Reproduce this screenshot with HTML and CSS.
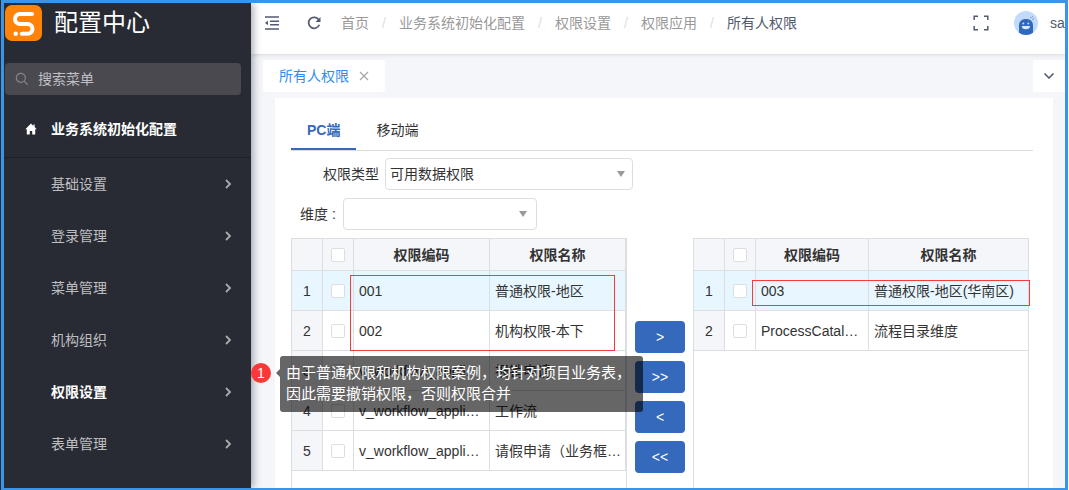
FILE: index.html
```html
<!DOCTYPE html>
<html lang="zh-CN">
<head>
<meta charset="utf-8">
<title>配置中心</title>
<link rel="stylesheet" href="styles.css">
</head>
<body>
<div class="frame">
  <aside class="sidebar">
    <div class="brand">
      <svg class="brand-logo" viewBox="0 0 37 36" aria-hidden="true">
        <rect width="37" height="36" rx="7" fill="#ff8308"/>
        <path d="M27 9H15a5 5 0 0 0-5 5v0a5 5 0 0 0 5 5h7.500a5 5 0 0 1 5 5v0a4.800 4.800 0 0 1-4.800 4.800H16.800" fill="none" stroke="#fff" stroke-width="4" stroke-linecap="round" stroke-linejoin="round"/>
        <circle cx="10.700" cy="28.800" r="2.200" fill="#fff"/>
      </svg>
      <span class="brand-name">配置中心</span>
    </div>
    <label class="search">
      <svg viewBox="0 0 14 14" width="14" height="14" aria-hidden="true"><circle cx="5.800" cy="5.800" r="4.500" fill="none" stroke="#85868d" stroke-width="1.200"/><path d="M9.100 9.100l3.700 3.700" stroke="#85868d" stroke-width="1.200"/></svg>
      <input class="search-input" type="text" placeholder="搜索菜单" aria-label="搜索菜单">
    </label>
    <nav class="menu">
      <a class="menu-home" href="#">
        <svg viewBox="0 0 12 12" width="12" height="12" aria-hidden="true"><path d="M6 .5L.3 6.300h1.500v5.200h3V8h2.400v3.500h3V6.300h1.500L9.700 4.100V1.500H8.400v1.400z" fill="#fff"/></svg>
        <span>业务系统初始化配置</span>
      </a>
      <a class="menu-item" href="#"><span>基础设置</span><svg class="chev" viewBox="0 0 8 10"><path d="M2 1l4 4-4 4"/></svg></a>
      <a class="menu-item" href="#"><span>登录管理</span><svg class="chev" viewBox="0 0 8 10"><path d="M2 1l4 4-4 4"/></svg></a>
      <a class="menu-item" href="#"><span>菜单管理</span><svg class="chev" viewBox="0 0 8 10"><path d="M2 1l4 4-4 4"/></svg></a>
      <a class="menu-item" href="#"><span>机构组织</span><svg class="chev" viewBox="0 0 8 10"><path d="M2 1l4 4-4 4"/></svg></a>
      <a class="menu-item menu-item-active" href="#"><span>权限设置</span><svg class="chev" viewBox="0 0 8 10"><path d="M2 1l4 4-4 4"/></svg></a>
      <a class="menu-item" href="#"><span>表单管理</span><svg class="chev" viewBox="0 0 8 10"><path d="M2 1l4 4-4 4"/></svg></a>
    </nav>
  </aside>

  <div class="main">
    <header class="topbar">
      <button class="icon-btn" type="button" aria-label="收起菜单">
        <svg viewBox="0 0 16 16" width="16" height="16" aria-hidden="true"><path d="M1 2h14M6 6.300h9M6 9.800h9M1 14h14" stroke="#515a6e" stroke-width="1.400" fill="none"/><path d="M4 5.800v4.400L1 8z" fill="#515a6e"/></svg>
      </button>
      <button class="icon-btn refresh" type="button" aria-label="刷新">
        <svg viewBox="0 0 14 14" width="14" height="14" aria-hidden="true"><path d="M11.700 3.700A5.500 5.500 0 1 0 12.300 8.700" fill="none" stroke="#515a6e" stroke-width="1.700"/><path d="M13.500 1v5H8.500z" fill="#515a6e"/></svg>
      </button>
      <nav class="crumbs">
        <a href="#">首页</a><i>/</i><a href="#">业务系统初始化配置</a><i>/</i><a href="#">权限设置</a><i>/</i><a href="#">权限应用</a><i>/</i><span>所有人权限</span>
      </nav>
      <div class="user">
        <button class="icon-btn" type="button" aria-label="全屏">
          <svg viewBox="0 0 16 16" width="16" height="16" aria-hidden="true"><path d="M5 1.200H1.200V5M11 1.200h3.800V5M5 14.800H1.200V11M11 14.800h3.800V11" fill="none" stroke="#515a6e" stroke-width="1.500"/></svg>
        </button>
        <svg class="avatar" viewBox="0 0 24 24" aria-hidden="true">
          <circle cx="12" cy="12" r="12" fill="#c2dafb"/>
          <path d="M5 21.700V14a6 6 0 0 1 6-6h2a6 6 0 0 1 6 6v7.700A11.800 11.800 0 0 1 12 24a11.800 11.800 0 0 1-7-2.300z" fill="#2f69bd"/>
          <rect x="8.500" y="11.700" width="1.600" height="1.600" fill="#d8e8ff"/><rect x="13.500" y="11.700" width="1.600" height="1.600" fill="#d8e8ff"/>
          <path d="M7.800 15h8.200a4.100 3.300 0 0 1-8.200 0z" fill="#d8e8ff"/>
          <path d="M16.600 6.200l.9.900M18.600 8.400l1.100-.7M18.200 5.200l.5.500" stroke="#2f69bd" stroke-width="1"/>
        </svg>
        <span class="user-name">sa</span>
      </div>
    </header>

    <div class="pages">
      <div class="page-tab">
        <span>所有人权限</span>
        <button class="icon-btn" type="button" aria-label="关闭"><svg viewBox="0 0 10 10" width="10" height="10"><path d="M1 1l8 8M9 1L1 9" stroke="#a5a5a5" stroke-width="1.100"/></svg></button>
      </div>
      <button class="page-more" type="button" aria-label="更多"><svg viewBox="0 0 10 6" width="10" height="6"><path d="M.5.500L5 5 9.500.500" fill="none" stroke="#4d5664" stroke-width="1.500"/></svg></button>
    </div>

    <section class="card">
      <div class="tabs">
        <button class="tab tab-active" type="button">PC端</button>
        <button class="tab" type="button">移动端</button>
      </div>
      <div class="field field-type">
        <label for="type">权限类型</label>
        <div class="select-box"><select id="type"><option>可用数据权限</option></select><span class="caret"></span></div>
      </div>
      <div class="field field-dim">
        <label for="dim">维度 :</label>
        <div class="select-box"><select id="dim"><option></option></select><span class="caret"></span></div>
      </div>

      <div class="transfer">
        <div class="grid">
          <table>
            <colgroup><col class="c-tick"><col class="c-tick"><col class="c-left"><col></colgroup>
            <thead><tr><th></th><th><input type="checkbox" aria-label="全选"></th><th>权限编码</th><th>权限名称</th></tr></thead>
            <tbody>
              <tr class="on"><td>1</td><td><input type="checkbox" aria-label="001"></td><td>001</td><td>普通权限-地区</td></tr>
              <tr><td>2</td><td><input type="checkbox" aria-label="002"></td><td>002</td><td>机构权限-本下</td></tr>
              <tr><td>3</td><td><input type="checkbox" aria-label="报销申请"></td><td>v_workflow_appli…</td><td>报销申请</td></tr>
              <tr><td>4</td><td><input type="checkbox" aria-label="工作流"></td><td>v_workflow_appli…</td><td>工作流</td></tr>
              <tr><td>5</td><td><input type="checkbox" aria-label="请假申请"></td><td>v_workflow_appli…</td><td>请假申请（业务框…</td></tr>
            </tbody>
          </table>
          <div class="mark mark-left"></div>
        </div>
        <div class="moves">
          <button type="button">&gt;</button>
          <button type="button">&gt;&gt;</button>
          <button type="button">&lt;</button>
          <button type="button">&lt;&lt;</button>
        </div>
        <div class="grid grid-right">
          <table>
            <colgroup><col class="c-tick"><col class="c-tick"><col class="c-right"><col></colgroup>
            <thead><tr><th></th><th><input type="checkbox" aria-label="全选"></th><th>权限编码</th><th>权限名称</th></tr></thead>
            <tbody>
              <tr class="on"><td>1</td><td><input type="checkbox" aria-label="003"></td><td>003</td><td>普通权限-地区(华南区)</td></tr>
              <tr><td>2</td><td><input type="checkbox" aria-label="流程目录维度"></td><td>ProcessCatal…</td><td>流程目录维度</td></tr>
            </tbody>
          </table>
          <div class="mark mark-right"></div>
        </div>
      </div>
    </section>

    <div class="note">
      <span class="note-num">1</span>
      <span class="note-arrow"></span>
      <p class="note-text">由于普通权限和机构权限案例，均针对项目业务表，<br>因此需要撤销权限，否则权限合并</p>
    </div>
  </div>
</div>
</body>
</html>
```

FILE: styles.css
```css
* { box-sizing: border-box; }

body {
  margin: 0;
  border-left: 1px solid #282b33;
  border-right: 1px solid #f5f8fc;
  font: 14px/20px "Liberation Sans", "Noto Sans CJK SC", sans-serif;
  color: #333;
}

a { color: inherit; text-decoration: none; }
button, input, select { font: inherit; color: inherit; }
svg { display: block; flex: none; }

.frame {
  display: flex;
  height: 100vh;
  border: 3px solid #3a94e7;
  border-bottom-width: 2px;
  overflow: hidden;
}

/* Sidebar */
.sidebar {
  z-index: 1;
  flex: none;
  width: 247px;
  background: #282b33;
  color: #bfbfc1;
  box-shadow: 2px 0 8px rgba(20, 30, 50, .4);
}
.brand {
  display: flex;
  align-items: center;
  gap: 12px;
  height: 60px;
  padding: 2px 1px 22px;
}
.brand-logo { width: 37px; height: 36px; }
.brand-name { font-size: 24px; line-height: 36px; color: #fff; }
.search {
  display: flex;
  align-items: center;
  gap: 9px;
  height: 32px;
  margin: 0 10px 0 1px;
  padding: 0 10px;
  border-radius: 4px;
  background: #4a4950;
}
.search-input {
  flex: 1;
  min-width: 0;
  padding: 0;
  border: 0;
  outline: 0;
  background: none;
}
.search-input::placeholder { color: #bfbfc4; opacity: 1; }
.menu-home {
  display: flex;
  align-items: center;
  gap: 14px;
  height: 63px;
  padding: 6px 21px 0;
  border-bottom: 1px solid #1d2026;
  font-weight: bold;
  color: #fff;
}
.menu-item {
  display: flex;
  align-items: center;
  justify-content: space-between;
  height: 52px;
  padding: 0 19px 0 47px;
}
.menu-item-active { font-weight: bold; color: #fff; }
.chev { width: 8px; height: 10px; fill: none; stroke: #aaabae; stroke-width: 1.800; }

/* Main area */
.main {
  position: relative;
  display: flex;
  flex-direction: column;
  flex: 1;
  min-width: 0;
  background: #f5f6f9;
}
.icon-btn { padding: 0; border: 0; background: none; }
.topbar {
  display: flex;
  flex: none;
  height: 51px;
  padding: 0 0 11px 13px;
  align-items: center;
  background: #fff;
  box-shadow: 0 1px 4px rgba(0, 21, 41, .12);
}
.refresh { margin: 0 20px 0 27px; }
.crumbs { display: flex; color: #999; white-space: nowrap; }
.crumbs i { width: 30px; text-align: center; font-style: normal; color: #dcdee2; }
.crumbs span { color: #515a6e; }
.user { display: flex; align-items: center; margin-left: auto; }
.avatar { width: 24px; height: 24px; margin: 0 12px 0 25px; }
.user-name { width: 15px; color: #515a6e; }

.pages {
  display: flex;
  flex: none;
  justify-content: space-between;
  padding: 6px 0 6px 12px;
}
.page-tab {
  display: flex;
  align-items: center;
  gap: 10px;
  height: 32px;
  padding: 0 16px;
  border-radius: 3px;
  background: #fff;
  color: #2d8cf0;
}
.page-more {
  display: flex;
  align-items: center;
  justify-content: center;
  width: 32px;
  height: 32px;
  padding: 0;
  border: 0;
  border-radius: 3px 0 0 3px;
  background: #fff;
}

.card {
  display: flex;
  flex-direction: column;
  flex: 1;
  min-height: 0;
  margin: 0 12px 0 24px;
  padding: 14px 20px 0 16px;
  background: #fff;
}
.tabs { display: flex; flex: none; gap: 4px; border-bottom: 1px solid #dcdcdc; }
.tab {
  height: 38px;
  padding: 0 16px;
  border: 0;
  border-bottom: 2px solid transparent;
  background: none;
}
.tab-active { border-bottom-color: #3569bb; color: #3569bb; font-weight: bold; }

.field { display: flex; flex: none; align-items: center; margin-top: 8px; }
.field-type { gap: 6px; margin-top: 7px; padding-left: 32px; }
.field-dim { gap: 8px; padding-left: 9px; }
.select-box { position: relative; width: 248px; }
.field-dim .select-box { width: 194px; }
.field-dim label { width: 35px; white-space: nowrap; }
.select-box select {
  appearance: none;
  display: block;
  width: 100%;
  height: 32px;
  padding: 0 4px;
  border: 1px solid #dcdee2;
  border-radius: 4px;
  background: #fff;
}
.caret {
  position: absolute;
  top: 13px;
  right: 8px;
  border: 4px solid transparent;
  border-top: 6px solid #999;
  border-bottom: 0;
  pointer-events: none;
}
.field-dim .caret { right: 10px; }

/* Transfer grids */
.transfer { display: flex; flex: 1; min-height: 0; margin-top: 8px; }
.grid { position: relative; flex: 0 1 336px; min-width: 0; border: 1px solid #dcdee2; border-bottom: 0; }
table { width: 100%; table-layout: fixed; border-collapse: separate; border-spacing: 0; }
.c-tick { width: 31px; }
.c-left { width: 136px; }
.c-right { width: 113px; }
th, td {
  height: 40px;
  padding: 0 5px;
  border-right: 1px solid #dcdee2;
  border-bottom: 1px solid #dcdee2;
  overflow: hidden;
  text-align: left;
  white-space: nowrap;
}
th { height: 32px; background: #f5f6fa; text-align: center; }
td:first-child { padding: 0; background: #f5f6fa; text-align: center; }
th:nth-child(2), td:nth-child(2) { padding: 0; text-align: center; }
.on td, .on td:first-child { background: #e8f7ff; }
.grid-right th:last-child, .grid-right td:last-child { border-right: 0; }
table input {
  appearance: none;
  display: block;
  width: 14px;
  height: 14px;
  margin: 0 auto;
  border: 1px solid #dcdee2;
  border-radius: 2px;
  background: #fff;
}
.moves {
  display: flex;
  flex: none;
  flex-direction: column;
  gap: 8px;
  padding: 83px 8px 0;
}
.moves button {
  flex: none;
  width: 50px;
  height: 32px;
  padding: 0;
  border: 0;
  border-radius: 4px;
  background: #3569bb;
  color: #fff;
}

/* Annotations drawn over the page */
.mark { position: absolute; border: 1px solid #f53b3b; }
.mark-left { top: 36px; left: 58px; width: 265px; height: 76px; }
.mark-right { top: 41px; left: 58px; width: 278px; height: 26px; }
.note {
  position: absolute;
  z-index: 2;
  top: 353px;
  left: 0;
  display: flex;
  align-items: center;
}
.note-num {
  width: 20px;
  height: 20px;
  margin: 0 5px 16px 0;
  border-radius: 50%;
  background: #fb3838;
  color: #fff;
  text-align: center;
}
.note-arrow {
  margin-bottom: 22px;
  border: 4px solid transparent;
  border-right-color: rgba(0, 0, 0, .6);
  border-left: 0;
}
.note-num { margin-bottom: 22px; }
.note-text {
  width: 363px;
  margin: 0;
  padding: 6px 0 8px 6px;
  border-radius: 3px;
  background: rgba(0, 0, 0, .6);
  color: #fff;
  font-size: 15px;
  line-height: 21px;
  white-space: nowrap;
}
```
